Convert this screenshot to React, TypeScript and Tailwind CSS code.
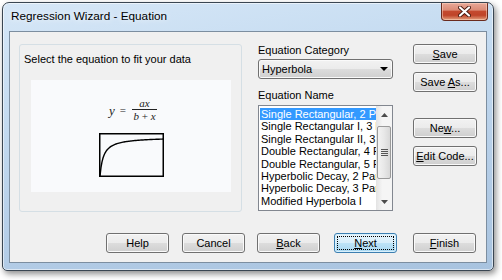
import React from "react";

const curve = Array.from({ length: 64 }, (_, i) => {
  const y = 43 - (39 * i) / (3.5 + i);
  return `${(i + 1).toFixed(1)},${y.toFixed(2)}`;
}).join(" ");

function Btn({
  children,
  className = "",
  def = false,
}: {
  children: React.ReactNode;
  className?: string;
  def?: boolean;
}) {
  if (def) {
    return (
      <div
        className={`h-[20px] rounded-[3px] border border-[#3c7fb1] bg-[linear-gradient(#e8f5fc_0%,#d6eefb_50%,#bde3f7_50%,#a9d8f2_100%)] p-[2px] shadow-[inset_0_0_0_1px_#d8f0fc] ${className}`}
      >
        <div className="h-full border border-dotted border-black flex items-center justify-center leading-none">
          <span className="whitespace-pre">{children}</span>
        </div>
      </div>
    );
  }
  return (
    <div
      className={`h-[20px] rounded-[3px] border border-[#707070] bg-[linear-gradient(#f2f2f2_0%,#ebebeb_50%,#dddddd_50%,#cfcfcf_100%)] shadow-[inset_0_0_0_1px_#fafafa] flex items-center justify-center leading-none ${className}`}
    >
      <span className="whitespace-pre">{children}</span>
    </div>
  );
}

const items = [
  "Single Rectangular, 2 Parameter",
  "Single Rectangular I, 3 Parameter",
  "Single Rectangular II, 3 Parameter",
  "Double Rectangular, 4 Parameter",
  "Double Rectangular, 5 Parameter",
  "Hyperbolic Decay, 2 Parameter",
  "Hyperbolic Decay, 3 Parameter",
  "Modified Hyperbola I",
];

function Tri({ up = false }: { up?: boolean }) {
  return (
    <svg width="7" height="4" viewBox="0 0 7 4">
      {up ? (
        <polygon points="0,4 7,4 3.5,0" fill="#4d4d4d" />
      ) : (
        <polygon points="0,0 7,0 3.5,4" fill="#4d4d4d" />
      )}
    </svg>
  );
}

export default function App() {
  return (
    <div className="w-[502px] h-[280px] bg-white pt-[2px] pl-[2px] font-['Liberation_Sans',Arial,sans-serif] text-black text-[11px]">
      <div className="w-[492px] h-[269px] rounded-t-[7px] rounded-b-[5px] border border-[#3a4652] bg-[linear-gradient(170deg,#d6e7f7_0%,#c3daf0_35%,#b4cde7_70%,#a8c3df_100%)] shadow-[inset_0_0_0_1px_rgba(255,255,255,0.55),2px_3px_6px_rgba(0,0,0,0.45)] flex flex-col overflow-hidden">
        {/* title bar */}
        <div className="h-[28px] flex items-start justify-between shrink-0">
          <div className="pl-[8px] pt-[6px] text-[11.75px] leading-[14px] text-shadow-[0_0_6px_#ffffff]">
            Regression Wizard - Equation
          </div>
          <div className="mr-[5px] w-[47px] h-[18px] rounded-b-[4px] border border-t-0 border-[#6a2b1e] bg-[linear-gradient(#e7a898_0%,#db8b76_42%,#c44a2f_48%,#bf4429_72%,#e3a07e_100%)] shadow-[inset_0_0_0_1px_rgba(255,220,200,0.5)] flex items-center justify-center">
            <svg width="13" height="11" viewBox="0 0 13 11">
              <path d="M2 1.5 L11 9.5 M11 1.5 L2 9.5" stroke="#4a1c12" strokeWidth="4" strokeLinecap="round" />
              <path d="M2 1.5 L11 9.5 M11 1.5 L2 9.5" stroke="#ffffff" strokeWidth="2.2" strokeLinecap="round" />
            </svg>
          </div>
        </div>

        {/* client area */}
        <div className="ml-[6px] w-[478px] h-[232px] border border-[#7c8ea0] bg-[#f0f0f0] flex flex-col">
          <div className="flex pt-[12px] pl-[9px]">
            {/* group box */}
            <div className="w-[223px] h-[168px] border border-[#d5dfe5] rounded-[3px] flex flex-col">
              <div className="pt-[8px] pl-[4px] leading-[13px]">Select the equation to fit your data</div>
              <div className="mt-[14px] ml-[11px] w-[200px] h-[112px] bg-[#f9fafc] flex flex-col items-center">
                <div className="mt-[18px] flex items-center font-['Liberation_Serif',serif] italic text-[#222] pl-[4px]">
                  <span className="text-[13px] leading-none mr-[5px]">y</span>
                  <span className="not-italic text-[11px] leading-none mr-[6px]">=</span>
                  <div className="flex flex-col items-center">
                    <span className="text-[11px] leading-[10px] px-[2px]">ax</span>
                    <div className="w-[25px] h-[1px] bg-[#222] my-[1px]" />
                    <span className="text-[11px] leading-[11px] whitespace-pre">
                      b <span className="not-italic">+</span> x
                    </span>
                  </div>
                </div>
                <svg className="mt-[11px]" width="65" height="44" viewBox="0 0 65 44">
                  <rect x="0.75" y="0.75" width="63.5" height="42.5" fill="none" stroke="#000" strokeWidth="1.5" />
                  <polyline points={curve} fill="none" stroke="#000" strokeWidth="1.4" />
                </svg>
              </div>
            </div>

            {/* middle column */}
            <div className="ml-[16px] w-[135px] flex flex-col">
              <div className="leading-[13px]">Equation Category</div>
              <div className="mt-[2px] h-[20px] rounded-[3px] border border-[#707070] bg-[linear-gradient(#f2f2f2_0%,#ebebeb_50%,#dddddd_50%,#cfcfcf_100%)] shadow-[inset_0_0_0_1px_#fafafa] flex items-center justify-between pl-[3px] pr-[4px]">
                <span className="leading-none">Hyperbola</span>
                <svg width="8" height="4" viewBox="0 0 8 4">
                  <polygon points="0,0 8,0 4,4" fill="#000" />
                </svg>
              </div>
              <div className="mt-[10px] leading-[13px]">Equation Name</div>
              <div className="mt-[3px] h-[106px] border border-[#828790] bg-white flex">
                <div className="w-[117px] pt-[2px] pl-[1px] overflow-hidden">
                  {items.map((t, i) => (
                    <div
                      key={t}
                      className={`h-[12.4px] leading-[12.4px] pl-[1px] whitespace-nowrap overflow-hidden ${
                        i === 0 ? "bg-[#3399ff] text-white" : ""
                      }`}
                    >
                      {t}
                    </div>
                  ))}
                </div>
                <div className="w-[16px] bg-[linear-gradient(90deg,#e3e3e3,#f5f5f5_40%,#f5f5f5)] flex flex-col">
                  <div className="h-[17px] flex items-center justify-center">
                    <Tri up />
                  </div>
                  <div className="mt-[3px] mx-[1px] h-[53px] rounded-[2px] border border-[#9a9a9a] bg-[linear-gradient(90deg,#f3f3f3,#e8e8e8_50%,#d8d8d8)] flex flex-col items-center justify-center gap-[1px]">
                    <div className="w-[7px] h-[1px] bg-[#555]" />
                    <div className="w-[7px] h-[1px] bg-[#555]" />
                    <div className="w-[7px] h-[1px] bg-[#555]" />
                    <div className="w-[7px] h-[1px] bg-[#555]" />
                  </div>
                  <div className="flex-1" />
                  <div className="h-[17px] flex items-center justify-center">
                    <Tri />
                  </div>
                </div>
              </div>
            </div>

            {/* right buttons */}
            <div className="ml-[20px] w-[64px] flex flex-col">
              <Btn>
                <span className="underline">S</span>ave
              </Btn>
              <Btn className="mt-[8px]">
                Save <span className="underline">A</span>s...
              </Btn>
              <Btn className="mt-[26px]">
                Ne<span className="underline">w</span>...
              </Btn>
              <Btn className="mt-[8px]">
                <span className="underline">E</span>dit Code...
              </Btn>
            </div>
          </div>

          {/* bottom buttons */}
          <div className="flex mt-[21px] pl-[96px]">
            <Btn className="w-[63px]">Help</Btn>
            <Btn className="w-[63px] ml-[13px]">Cancel</Btn>
            <Btn className="w-[63px] ml-[12px]">
              <span className="underline">B</span>ack
            </Btn>
            <Btn def className="w-[63px] ml-[14px]">
              <span className="underline">N</span>ext
            </Btn>
            <Btn className="w-[63px] ml-[16px]">
              <span className="underline">F</span>inish
            </Btn>
          </div>
        </div>
      </div>
    </div>
  );
}
